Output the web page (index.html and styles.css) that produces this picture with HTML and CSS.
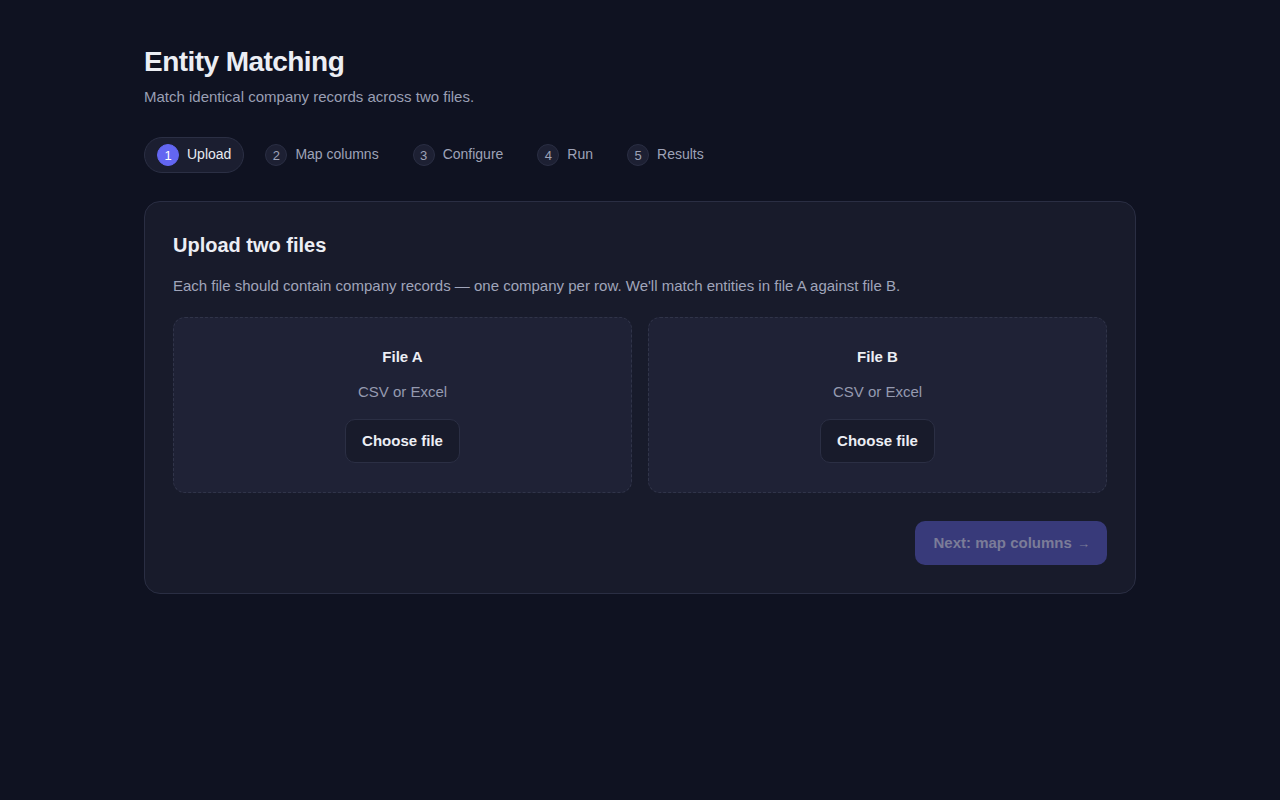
FILE: index.html
```html
<!DOCTYPE html>
<html lang="en">
<head>
<meta charset="utf-8">
<title>Entity Matching</title>
<link rel="stylesheet" href="styles.css">
</head>
<body>
<main class="page">
  <h1 class="title">Entity Matching</h1>
  <p class="subtitle">Match identical company records across two files.</p>

  <nav class="steps">
    <div class="step active"><span class="num">1</span><span class="label">Upload</span></div>
    <div class="step"><span class="num">2</span><span class="label">Map columns</span></div>
    <div class="step"><span class="num">3</span><span class="label">Configure</span></div>
    <div class="step"><span class="num">4</span><span class="label">Run</span></div>
    <div class="step"><span class="num">5</span><span class="label">Results</span></div>
  </nav>

  <section class="card">
    <h2 class="card-title">Upload two files</h2>
    <p class="card-desc">Each file should contain company records — one company per row. We'll match entities in file A against file B.</p>
    <div class="drops">
      <div class="drop">
        <div class="drop-name">File A</div>
        <div class="drop-hint">CSV or Excel</div>
        <button class="choose">Choose file</button>
      </div>
      <div class="drop">
        <div class="drop-name">File B</div>
        <div class="drop-hint">CSV or Excel</div>
        <button class="choose">Choose file</button>
      </div>
    </div>
    <div class="actions">
      <button class="next" disabled>Next: map columns <span class="arrow">→</span></button>
    </div>
  </section>
</main>
</body>
</html>
```

FILE: styles.css
```css
* { box-sizing: border-box; }
html, body {
  margin: 0;
  background: #0f1221;
  color: #e6e8ef;
  font-family: "Liberation Sans", Arial, sans-serif;
}
.page {
  width: 992px;
  margin: 0 auto;
  padding-top: 45px;
}
.title {
  margin: 0;
  font-size: 28px;
  line-height: 34px;
  font-weight: 700;
  letter-spacing: -0.55px;
  color: #eceef4;
}
.subtitle {
  margin: 7px 0 0;
  font-size: 15px;
  line-height: 22px;
  color: #9a9fb4;
}
.steps {
  display: flex;
  gap: 8px;
  margin-top: 29px;
}
.step {
  display: flex;
  align-items: center;
  gap: 8px;
  height: 36px;
  padding: 0 12px 2px;
  border: 1px solid transparent;
  border-radius: 18px;
  font-size: 14px;
  color: #9ea3b8;
}
.step.active {
  background: #1b1e30;
  border-color: #2b2f44;
  color: #e8eaf1;
}
.num {
  width: 22px;
  height: 22px;
  border-radius: 50%;
  background: #1d2033;
  border: 1px solid #2a2e43;
  display: flex;
  align-items: center;
  justify-content: center;
  font-size: 13px;
  color: #9ea3b8;
  margin-top: 2px;
}
.step.active .num {
  background: #6366f1;
  border-color: #6366f1;
  color: #ffffff;
}
.card {
  margin-top: 28px;
  background: #181b2b;
  border: 1px solid #2a2e43;
  border-radius: 16px;
  padding: 28px;
}
.card-title {
  margin: 0;
  font-size: 20px;
  line-height: 30px;
  font-weight: 700;
  color: #eceef4;
}
.card-desc {
  margin: 15px 0 0;
  font-size: 15px;
  line-height: 22px;
  color: #a0a5ba;
}
.drops {
  display: grid;
  grid-template-columns: 1fr 1fr;
  gap: 16px;
  margin-top: 20px;
}
.drop {
  background: #1f2236;
  border: 1px dashed #303449;
  border-radius: 12px;
  padding: 28px 28px 29px;
  display: flex;
  flex-direction: column;
  align-items: center;
}
.drop-name {
  font-size: 15px;
  line-height: 22px;
  font-weight: 700;
  color: #eceef4;
}
.drop-hint {
  margin-top: 13px;
  font-size: 15px;
  line-height: 22px;
  color: #959ab0;
}
.choose {
  margin-top: 16px;
  height: 44px;
  padding: 0 16px 1px;
  background: #181b2b;
  border: 1px solid #2b2f44;
  border-radius: 10px;
  font-family: inherit;
  font-size: 15px;
  font-weight: 700;
  color: #eceef4;
}
.actions {
  display: flex;
  justify-content: flex-end;
  margin-top: 28px;
}
.next {
  height: 44px;
  padding: 0 17px 1px 18px;
  background: #383a7a;
  border: none;
  border-radius: 10px;
  font-family: inherit;
  font-size: 15px;
  font-weight: 700;
  color: #7b7c98;
}
.arrow {
  font-weight: 400;
  font-size: 13px;
  margin-left: 1px;
}
```
